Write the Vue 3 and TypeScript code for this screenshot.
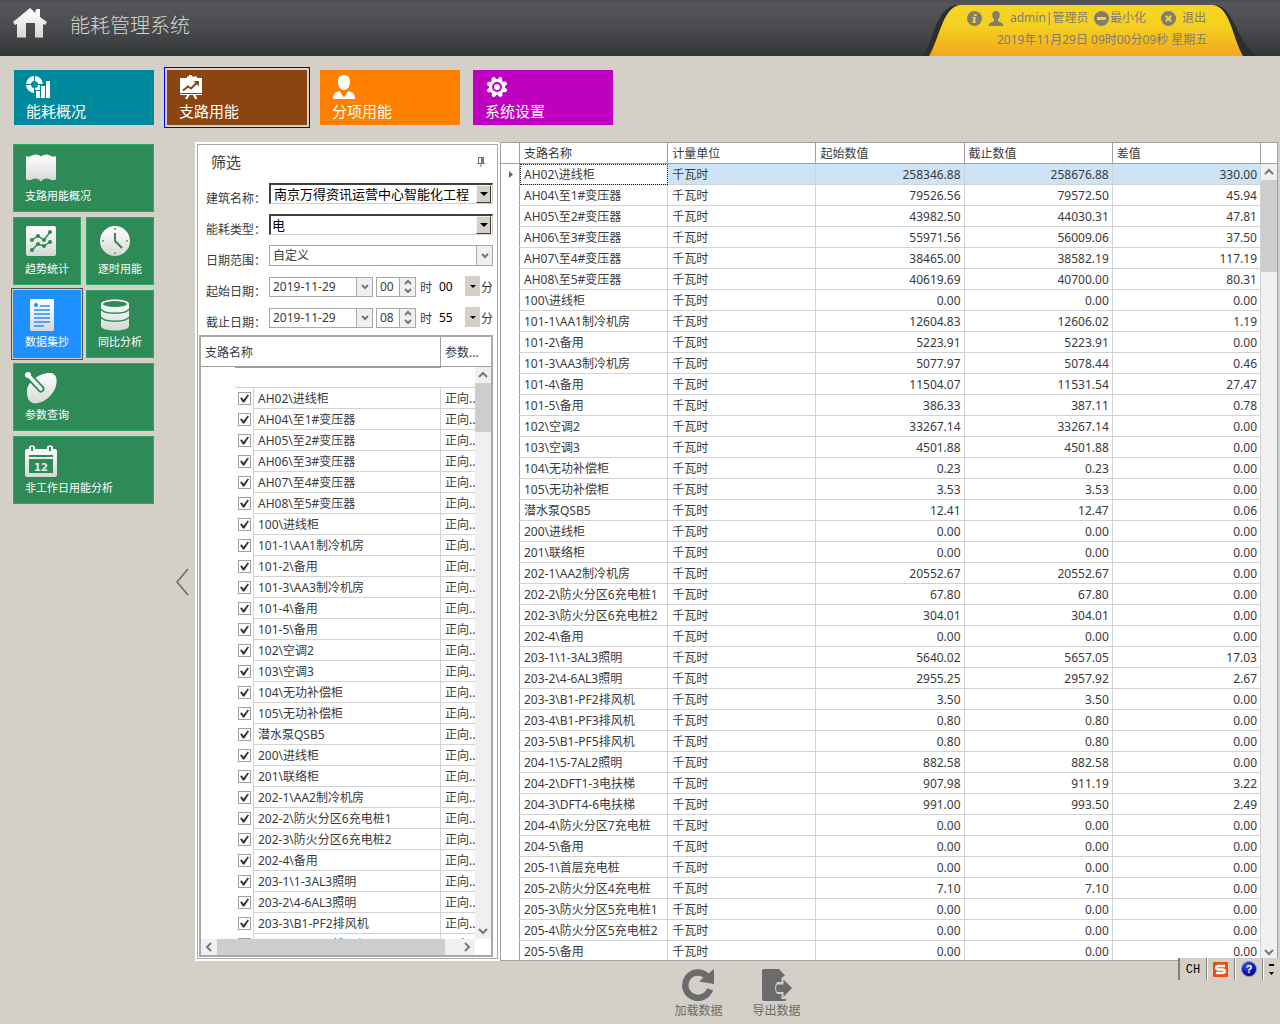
<script setup lang="ts">
import { ref } from 'vue'

interface Reading {
  name: string
  start: string
  end: string
  diff: string
}

const rawReadings: string[] = [
  'AH02\\进线柜|258346.88|258676.88|330.00',
  'AH04\\至1#变压器|79526.56|79572.50|45.94',
  'AH05\\至2#变压器|43982.50|44030.31|47.81',
  'AH06\\至3#变压器|55971.56|56009.06|37.50',
  'AH07\\至4#变压器|38465.00|38582.19|117.19',
  'AH08\\至5#变压器|40619.69|40700.00|80.31',
  '100\\进线柜|0.00|0.00|0.00',
  '101-1\\AA1制冷机房|12604.83|12606.02|1.19',
  '101-2\\备用|5223.91|5223.91|0.00',
  '101-3\\AA3制冷机房|5077.97|5078.44|0.46',
  '101-4\\备用|11504.07|11531.54|27.47',
  '101-5\\备用|386.33|387.11|0.78',
  '102\\空调2|33267.14|33267.14|0.00',
  '103\\空调3|4501.88|4501.88|0.00',
  '104\\无功补偿柜|0.23|0.23|0.00',
  '105\\无功补偿柜|3.53|3.53|0.00',
  '潜水泵QSB5|12.41|12.47|0.06',
  '200\\进线柜|0.00|0.00|0.00',
  '201\\联络柜|0.00|0.00|0.00',
  '202-1\\AA2制冷机房|20552.67|20552.67|0.00',
  '202-2\\防火分区6充电桩1|67.80|67.80|0.00',
  '202-3\\防火分区6充电桩2|304.01|304.01|0.00',
  '202-4\\备用|0.00|0.00|0.00',
  '203-1\\1-3AL3照明|5640.02|5657.05|17.03',
  '203-2\\4-6AL3照明|2955.25|2957.92|2.67',
  '203-3\\B1-PF2排风机|3.50|3.50|0.00',
  '203-4\\B1-PF3排风机|0.80|0.80|0.00',
  '203-5\\B1-PF5排风机|0.80|0.80|0.00',
  '204-1\\5-7AL2照明|882.58|882.58|0.00',
  '204-2\\DFT1-3电扶梯|907.98|911.19|3.22',
  '204-3\\DFT4-6电扶梯|991.00|993.50|2.49',
  '204-4\\防火分区7充电桩|0.00|0.00|0.00',
  '204-5\\备用|0.00|0.00|0.00',
  '205-1\\首层充电桩|0.00|0.00|0.00',
  '205-2\\防火分区4充电桩|7.10|7.10|0.00',
  '205-3\\防火分区5充电桩1|0.00|0.00|0.00',
  '205-4\\防火分区5充电桩2|0.00|0.00|0.00',
  '205-5\\备用|0.00|0.00|0.00',
]

const readings: Reading[] = rawReadings.map((line) => {
  const [name, start, end, diff] = line.split('|')
  return { name, start, end, diff }
})

const branches = ref(readings.slice(0, 27).map((r) => ({ name: r.name, checked: true })))
const selected = ref(0)

const periods = ref([
  { id: 'from', label: '起始日期：', date: '2019-11-29', hour: '00', minute: '00' },
  { id: 'to', label: '截止日期：', date: '2019-11-29', hour: '08', minute: '55' },
])
const minutes: string[] = Array.from({ length: 12 }, (_, i) => String(i * 5).padStart(2, '0'))

function stepHour(index: number, delta: number): void {
  const p = periods.value[index]
  p.hour = String((Number(p.hour) + delta + 24) % 24).padStart(2, '0')
}
</script>

<template>
  <div class="app">
    <svg class="defs" width="0" height="0" aria-hidden="true">
      <defs>
        <linearGradient id="silver" x1="0" y1="0" x2="0" y2="1">
          <stop offset="0" stop-color="#ffffff" />
          <stop offset="1" stop-color="#d6d8d7" />
        </linearGradient>
        <linearGradient id="gold" x1="0" y1="0" x2="0" y2="1">
          <stop offset="0" stop-color="#f5d623" />
          <stop offset="0.45" stop-color="#f5ce22" />
          <stop offset="1" stop-color="#f2a71b" />
        </linearGradient>
        <radialGradient id="ball" cx="0.4" cy="0.3" r="0.8">
          <stop offset="0" stop-color="#3f5bf0" />
          <stop offset="0.6" stop-color="#0a12b4" />
          <stop offset="1" stop-color="#000060" />
        </radialGradient>
      </defs>
    </svg>

    <header class="top">
      <svg class="home" width="36" height="32" viewBox="0 0 36 32" aria-hidden="true">
        <path fill="url(#silver)" d="M18 0 L23.500 5 V2 L25 1 H28 V9 L35 14 L33 17 L31 16 V29.500 H23 V15 H14 V29.500 H5 V16 L3 17 L1 14 Z" />
      </svg>
      <h1>能耗管理系统</h1>
      <div class="account">
        <svg class="tab" width="370" height="56" viewBox="0 0 370 56" aria-hidden="true">
          <path fill="#2b2d2f" d="M12 56 C22 50 24 8 46 5 H306 C326 8 328 50 350 56 Z" />
          <path fill="url(#gold)" d="M19 56 C30 38 32 8 50 5 H303 C320 7 322 36 333 56 Z" />
        </svg>
        <div class="line">
          <svg width="15" height="15" viewBox="0 0 15 15" aria-hidden="true">
            <circle cx="7.500" cy="7.500" r="7.500" fill="#7f7d72" />
            <path fill="#f5d223" d="M7.500 3 h2.500 l-.5 2 h-2.500z M5.500 6 h3.500 l-1 4.500 h1 l-.5 1.500 h-3.200 l1.200 -4.700 h-1.200z" />
          </svg>
          <svg class="who" width="16" height="15" viewBox="0 0 16 15" aria-hidden="true">
            <path fill="#7f7d72" d="M8 0 C11 0 12 2 11.700 4.500 C11.500 7 10.500 7.500 10 8.500 V10 C11 11.500 15 11 15.500 15 H.5 C1 11 5 11.500 6 10 V8.500 C5.500 7.500 4.500 7 4.300 4.500 C4 2 5 0 8 0Z" />
          </svg>
          <span class="user">admin|管理员</span>
          <button type="button" class="min">
            <svg width="15" height="15" viewBox="0 0 15 15" aria-hidden="true">
              <circle cx="7.500" cy="7.500" r="7.500" fill="#7f7d72" /><path fill="#f5d223" d="M3 6h9v3H3z" />
            </svg>最小化
          </button>
          <button type="button" class="quit">
            <svg width="15" height="15" viewBox="0 0 15 15" aria-hidden="true">
              <circle cx="7.500" cy="7.500" r="7.500" fill="#7f7d72" /><path stroke="#f5d223" stroke-width="2.200" d="M4.800 4.800l5.400 5.400M10.200 4.800l-5.400 5.400" />
            </svg>退出
          </button>
        </div>
        <time class="clock">2019年11月29日 09时00分09秒 星期五</time>
      </div>
    </header>

    <nav class="tiles">
      <button type="button" class="tile teal">
        <svg width="26" height="24" viewBox="0 0 26 24" aria-hidden="true">
          <circle cx="8.500" cy="9.500" r="6" fill="none" stroke="#fff" stroke-width="5" />
          <path stroke="#00889c" stroke-width="1" d="M8.500 0v6M8.500 13v6M0 9.500h6M12 9.500h6" />
          <path fill="#00889c" d="M9 15h5v-5h5v-5h7V24H9z" />
          <path fill="#fff" d="M10 16h4v7h-4zM15 11h4v12h-4zM20 6h4v17h-4z" />
        </svg>
        <span>能耗概况</span>
      </button>
      <button type="button" class="tile brown active">
        <svg width="26" height="24" viewBox="0 0 26 24" aria-hidden="true">
          <path fill="#fff" d="M10 0h3v1.500h5V3h5V18H1V3H8V1.500h2zM1 19h22v1H1zM8 20h2.500l-2 4H6zM14 20h2.500l2 4H16z" />
          <path fill="none" stroke="#8b4513" stroke-width="2" d="M4 15.500l5-4 3 2 6-6" />
          <path fill="#8b4513" d="M14.500 6H20v5.500z" />
        </svg>
        <span>支路用能</span>
      </button>
      <button type="button" class="tile orange">
        <svg width="26" height="24" viewBox="0 0 26 24" aria-hidden="true">
          <path fill="#fff" d="M12 0c5 0 6 3 6 7 0 5-3 8-6 8s-6-3-6-8c0-4 1-7 6-7zM7.500 16L12 22.500l4.500-6.500C20 17.500 23 18 23 24H1c0-6 3-6.500 6.500-8z" />
        </svg>
        <span>分项用能</span>
      </button>
      <button type="button" class="tile purple">
        <svg width="26" height="24" viewBox="0 0 26 24" aria-hidden="true">
          <g fill="#fff">
            <circle cx="12" cy="12" r="8" />
            <path v-for="n in 8" :key="n" d="M9.500 5L10.500 1.500h3L14.500 5z" :transform="`rotate(${n * 45 + 22} 12 12)`" />
          </g>
          <circle cx="12" cy="12" r="4" fill="none" stroke="#c000c0" stroke-width="2" />
        </svg>
        <span>系统设置</span>
      </button>
    </nav>

    <div class="body">
      <aside class="side">
        <nav class="cards">
          <button type="button" class="card wide">
            <svg width="32" height="32" viewBox="0 0 32 32" aria-hidden="true">
              <path fill="url(#silver)" d="M1 3 Q4 4.500 7 2.500 Q12 0 16 3.500 Q20 0 25 2.500 Q28 4.500 31 3 V26.500 Q27 28 24 26 Q19 24.500 16 28.500 Q13 24.500 8 26 Q5 28 1 26.500 Z" />
            </svg>
            <span>支路用能概况</span>
          </button>
          <button type="button" class="card">
            <svg width="32" height="32" viewBox="0 0 32 32" aria-hidden="true">
              <rect x="1" y="0" width="30" height="30" rx="2" fill="url(#silver)" />
              <g fill="none" stroke="#2e8b57" stroke-width="1.500"><path d="M7 14l6-4 6 4 6-8M7 24l6-6 6 2 6-4" /></g>
              <g fill="#2e8b57"><circle cx="7" cy="14" r="2" /><circle cx="13" cy="10" r="2" /><circle cx="19" cy="14" r="2" /><circle cx="25" cy="6" r="2" /><circle cx="7" cy="24" r="2" /><circle cx="13" cy="18" r="2" /><circle cx="19" cy="20" r="2" /><circle cx="25" cy="16" r="2" /></g>
            </svg>
            <span>趋势统计</span>
          </button>
          <button type="button" class="card">
            <svg width="32" height="32" viewBox="0 0 32 32" aria-hidden="true">
              <circle cx="17" cy="15" r="15" fill="url(#silver)" />
              <path fill="none" stroke="#2e8b57" stroke-width="2" d="M17 7v8l7 7" />
              <path fill="#6fb38c" d="M16 2h2v2h-2zM16 26h2v2h-2zM4 14h2v2H4zM28 14h2v2h-2z" />
            </svg>
            <span>逐时用能</span>
          </button>
          <button type="button" class="card current">
            <svg width="32" height="32" viewBox="0 0 32 32" aria-hidden="true">
              <rect x="5" y="0" width="24" height="32" rx="1" fill="url(#silver)" />
              <circle cx="11" cy="6" r="2" fill="#1e90ff" />
              <path stroke="#1e90ff" stroke-width="1.500" d="M15 7h10M9 11h16M9 15h16M9 19h16M9 23h16M9 27h10" />
            </svg>
            <span>数据集抄</span>
          </button>
          <button type="button" class="card">
            <svg width="32" height="32" viewBox="0 0 32 32" aria-hidden="true">
              <path fill="url(#silver)" d="M3 5C3-1 31-1 31 5V27C31 33 3 33 3 27Z" />
              <ellipse cx="17" cy="5" rx="12" ry="3" fill="#2e8b57" />
              <path fill="none" stroke="#2e8b57" stroke-width="1.500" d="M3 10C5 15.500 29 15.500 31 10M3 18C5 23.500 29 23.500 31 18" />
            </svg>
            <span>同比分析</span>
          </button>
          <button type="button" class="card wide">
            <svg width="34" height="32" viewBox="0 0 34 32" aria-hidden="true">
              <path fill="url(#silver)" d="M2 20C1 11 14 0 26 1C32 2 33 9 30 17C25 27 14 33 8 31C4 30 2 26 2 20Z" />
              <path stroke="#2e8b57" stroke-width="7" stroke-linecap="round" d="M3 3L16 17" />
              <path stroke="#f4f4f4" stroke-width="3.500" stroke-linecap="round" d="M3 3L16 17" />
              <circle cx="3" cy="3" r="3" fill="#fff" />
            </svg>
            <span>参数查询</span>
          </button>
          <button type="button" class="card wide">
            <svg width="32" height="32" viewBox="0 0 32 32" aria-hidden="true">
              <path fill="url(#silver)" fill-rule="evenodd" d="M2 4H4V2C4 0 10 0 10 2V4H22V2C22 0 28 0 28 2V4H30Q32 4 32 6V30Q32 32 30 32H2Q0 32 0 30V6Q0 4 2 4ZM6 2V6H8V2ZM24 2V6H26V2ZM4 10V12H28V10ZM4 14V28H28V14Z" />
              <text x="16" y="26" text-anchor="middle" font-family="DejaVu Sans, sans-serif" font-size="10" font-weight="700" fill="#e6e8e7">12</text>
            </svg>
            <span>非工作日用能分析</span>
          </button>
        </nav>
        <button type="button" class="fold" aria-label="收起">
          <svg width="14" height="28" viewBox="0 0 14 28" aria-hidden="true"><path fill="none" stroke="#6b6b6b" stroke-width="1.500" d="M13 1L2 14L13 27" /></svg>
        </button>
      </aside>

      <main class="content">
        <div class="panels">
          <section class="filter">
            <div class="frame">
              <div class="caption">
                <h2>筛选</h2>
                <svg width="8" height="10" viewBox="0 0 8 10" aria-hidden="true"><path fill="#777" fill-rule="evenodd" d="M1 0H7V6H8V7H4.500V10H3.500V7H0V6H1ZM2 1V6H4V1Z" /></svg>
              </div>
              <form class="fields" @submit.prevent>
                <div class="field">
                  <label for="building">建筑名称：</label>
                  <span class="combo classic">
                    <select id="building"><option>南京万得资讯运营中心智能化工程</option></select>
                    <i class="drop"></i>
                  </span>
                </div>
                <div class="field">
                  <label for="energy">能耗类型：</label>
                  <span class="combo classic slim">
                    <select id="energy"><option>电</option></select>
                    <i class="drop"></i>
                  </span>
                </div>
                <div class="field">
                  <label for="range">日期范围：</label>
                  <span class="combo flat">
                    <select id="range"><option>自定义</option></select>
                    <i class="drop"><svg width="8" height="6" viewBox="0 0 8 6"><path d="M1 1l3 3 3-3" /></svg></i>
                  </span>
                </div>
                <div v-for="(p, i) in periods" :key="p.id" class="field">
                  <label :for="p.id">{{ p.label }}</label>
                  <span class="box date">
                    <input :id="p.id" v-model="p.date" type="text" />
                    <button type="button" aria-label="选择日期"><svg width="8" height="6" viewBox="0 0 8 6"><path d="M1 1l3 3 3-3" /></svg></button>
                  </span>
                  <span class="box hour">
                    <input :id="p.id + '-hour'" v-model="p.hour" type="text" />
                    <span class="spin">
                      <button type="button" aria-label="增加" @click="stepHour(i, 1)"><svg width="8" height="6" viewBox="0 0 8 6"><path d="M1 5l3-3 3 3" /></svg></button>
                      <button type="button" aria-label="减少" @click="stepHour(i, -1)"><svg width="8" height="6" viewBox="0 0 8 6"><path d="M1 1l3 3 3-3" /></svg></button>
                    </span>
                  </span>
                  <label class="unit" :for="p.id + '-hour'">时</label>
                  <span class="combo minute">
                    <select :id="p.id + '-minute'" v-model="p.minute"><option v-for="m in minutes" :key="m">{{ m }}</option></select>
                    <i class="drop"></i>
                  </span>
                  <label class="unit" :for="p.id + '-minute'">分</label>
                </div>
              </form>

              <div class="tree">
                <table>
                  <colgroup><col class="c-indent" /><col class="c-check" /><col /><col class="c-param" /></colgroup>
                  <thead>
                    <tr><th colspan="3">支路名称</th><th>参数...</th></tr>
                  </thead>
                  <tbody>
                    <tr class="group"><td></td><td></td><td></td><td></td></tr>
                    <tr v-for="b in branches" :key="b.name">
                      <td class="indent"></td>
                      <td class="check"><input v-model="b.checked" type="checkbox" :aria-label="b.name" /></td>
                      <td>{{ b.name }}</td>
                      <td>正向...</td>
                    </tr>
                  </tbody>
                </table>
                <div class="vbar">
                  <svg width="10" height="8" viewBox="0 0 10 8"><path d="M1 6l4-4 4 4" /></svg>
                  <div class="thumb short"></div>
                  <svg width="10" height="8" viewBox="0 0 10 8"><path d="M1 2l4 4 4-4" /></svg>
                </div>
                <div class="hbar">
                  <svg width="8" height="10" viewBox="0 0 8 10"><path d="M6 1l-4 4 4 4" /></svg>
                  <div class="thumb"></div>
                  <svg width="8" height="10" viewBox="0 0 8 10"><path d="M2 1l4 4-4 4" /></svg>
                </div>
              </div>
            </div>
          </section>

          <section class="grid">
            <div class="gridview">
              <table>
                <colgroup><col class="c-mark" /><col /><col /><col /><col /><col /></colgroup>
                <thead>
                  <tr><th></th><th>支路名称</th><th>计量单位</th><th>起始数值</th><th>截止数值</th><th>差值</th></tr>
                </thead>
                <tbody>
                  <tr v-for="(r, i) in readings" :key="r.name" :class="{ picked: i === selected }" @click="selected = i">
                    <td class="mark"><svg v-if="i === selected" width="4" height="7" viewBox="0 0 4 7"><path fill="#666" d="M0 0l4 3.500-4 3.500z" /></svg></td>
                    <td class="name">{{ r.name }}</td>
                    <td>千瓦时</td>
                    <td class="num">{{ r.start }}</td>
                    <td class="num">{{ r.end }}</td>
                    <td class="num">{{ r.diff }}</td>
                  </tr>
                </tbody>
              </table>
            </div>
            <div class="rail">
              <div class="cap"></div>
              <div class="vbar">
                <svg width="10" height="8" viewBox="0 0 10 8"><path d="M1 6l4-4 4 4" /></svg>
                <div class="thumb"></div>
                <svg width="10" height="8" viewBox="0 0 10 8"><path d="M1 2l4 4 4-4" /></svg>
              </div>
            </div>
          </section>
        </div>

        <footer class="actions">
          <button type="button">
            <svg width="32" height="32" viewBox="0 0 32 32" aria-hidden="true">
              <path fill="none" stroke="#6b6b6b" stroke-width="6.500" d="M25 7.200A12.700 12.700 0 1 0 28 20.300" />
              <path fill="#6b6b6b" d="M32 0V15L17 12.500Z" />
            </svg>
            <span>加载数据</span>
          </button>
          <button type="button">
            <svg width="32" height="32" viewBox="0 0 32 32" aria-hidden="true">
              <path fill="#6b6b6b" d="M3 0H18L24 6.500L20.500 9V13H16Q12 19.500 16 25H20.500V30H25V31Q25 32 24 32H3Q1 32 1 30V2Q1 0 3 0Z" />
              <path fill="#6b6b6b" d="M16 15.500H22.500V10.500L31 19L22.500 28V23H16Q14 19.500 16 15.500Z" />
            </svg>
            <span>导出数据</span>
          </button>
        </footer>
      </main>
    </div>

    <div class="ime">
      <span class="lang">CH</span>
      <span class="slot">
        <svg width="15" height="15" viewBox="0 0 15 15" aria-hidden="true">
          <rect width="15" height="15" rx="1" fill="#e94e0f" />
          <path fill="none" stroke="#fff" stroke-width="2.500" d="M12 4H5.500C2.500 4 2.500 7.500 5.500 7.500H9.500C12.500 7.500 12.500 11 9.500 11H3" />
        </svg>
      </span>
      <span class="slot">
        <svg width="16" height="16" viewBox="0 0 16 16" aria-hidden="true">
          <circle cx="8" cy="8" r="7.500" fill="url(#ball)" stroke="#8a96a8" />
          <text x="8" y="12" text-anchor="middle" font-family="Liberation Sans, sans-serif" font-size="11" font-weight="700" fill="#fff">?</text>
        </svg>
      </span>
      <span class="slot more">
        <svg width="5" height="11" viewBox="0 0 5 11" aria-hidden="true"><path d="M0 0h5v2H0zM0 8h5L2.500 11z" /></svg>
      </span>
    </div>
  </div>
</template>

<style>
body {
  margin: 0;
  background: #d4d0c8;
}
</style>

<style scoped>
* {
  box-sizing: border-box;
}
.app {
  position: relative;
  display: flex;
  flex-direction: column;
  height: 100vh;
  overflow: hidden;
  background: #d4d0c8;
  color: #3a3a3a;
  font: 12px/20px "Noto Sans", "Noto Sans CJK SC", sans-serif;
}
.defs {
  position: absolute;
}
button,
input,
select {
  margin: 0;
  padding: 0;
  border: 0;
  border-radius: 0;
  background: none;
  color: inherit;
  font: inherit;
}
h1,
h2 {
  margin: 0;
  font-weight: 400;
}
svg {
  display: block;
  flex: none;
}

/* header */
.top {
  display: flex;
  flex: none;
  height: 56px;
  padding-left: 12px;
  background: linear-gradient(#4b4c50, #55565a 4px, #4a4b4e 50%, #323537);
}
.home {
  margin-top: 8px;
}
h1 {
  margin: 11px 0 0 22px;
  color: #d8d4cc;
  font-size: 20px;
  font-weight: 300;
  line-height: 30px;
}
.account {
  position: relative;
  width: 370px;
  margin-left: auto;
  padding: 8px 0 0 57px;
  color: #7f7d72;
  white-space: nowrap;
}
.tab {
  position: absolute;
  top: 0;
  left: 0;
}
.line {
  position: relative;
  display: flex;
  align-items: center;
  height: 20px;
}
.who {
  margin-left: 6px;
}
.user {
  flex: none;
  width: 78px;
  margin: 0 6px;
}
.account button {
  display: flex;
  align-items: center;
}
.min {
  gap: 1px;
}
.quit {
  gap: 6px;
  margin-left: 15px;
}
.clock {
  position: relative;
  display: block;
  padding-left: 30px;
  line-height: 24px;
}

/* main navigation */
.tiles {
  display: flex;
  flex: none;
  gap: 13px;
  padding: 14px 14px 17px;
}
.tile {
  display: flex;
  flex-direction: column;
  align-items: flex-start;
  width: 140px;
  height: 55px;
  padding: 5px 12px 0;
  color: #fff;
  font-size: 15px;
  line-height: 24px;
}
.teal {
  background: #00889c;
}
.brown {
  background: #8b4513;
}
.orange {
  background: #ff8000;
}
.purple {
  background: #c000c0;
}
.active {
  outline: 1px solid #0000e8;
  outline-offset: 2px;
}

/* sidebar */
.body {
  display: flex;
  flex: 1;
  min-height: 0;
}
.side {
  display: flex;
  flex: none;
  width: 195px;
  padding: 2px 6px 0 13px;
  justify-content: space-between;
}
.cards {
  display: grid;
  grid-template-columns: 68px 68px;
  grid-auto-rows: 68px;
  gap: 5px;
}
.card {
  display: flex;
  flex-direction: column;
  align-items: flex-start;
  padding: 8px 11px 0;
  border: 1px solid #2fa866;
  background: #2e8b57;
  color: #fff;
  font-size: 11px;
  line-height: 22px;
  white-space: nowrap;
}
.wide {
  grid-column: span 2;
}
.current {
  border-color: #1e90ff;
  background: #1e90ff;
  outline: 1px solid #55514c;
  outline-offset: 1px;
}
.fold {
  align-self: center;
  margin-bottom: 4px;
}

/* panels */
.content {
  display: flex;
  flex: 1;
  flex-direction: column;
  min-width: 0;
}
.panels {
  display: flex;
  flex: 1;
  min-height: 0;
  padding-right: 2px;
}
.filter {
  flex: none;
  width: 305px;
  padding: 2px;
  background: #fff;
}
.frame {
  display: flex;
  flex-direction: column;
  height: 100%;
  border: 1px solid #a8a8a8;
}
.caption {
  display: flex;
  align-items: center;
  justify-content: space-between;
  height: 38px;
  padding: 0 12px 4px 13px;
}
h2 {
  font-size: 15px;
}
.fields {
  display: flex;
  flex-direction: column;
  gap: 10px;
  padding: 0 4px 7px 8px;
}
.field {
  display: flex;
  align-items: center;
  height: 21px;
}
.field > label {
  flex: none;
  width: 63px;
  padding-top: 11px;
  line-height: 12px;
  white-space: nowrap;
}
.field > .unit {
  width: 12px;
  padding-top: 2px;
}
.combo {
  position: relative;
  display: block;
  flex: 1;
  min-width: 0;
  height: 21px;
}
.combo select {
  width: 100%;
  height: 100%;
  appearance: none;
}
.drop {
  position: absolute;
  top: 2px;
  right: 2px;
  bottom: 1px;
  display: grid;
  place-items: center;
  width: 15px;
  background: #d4d0c8;
  pointer-events: none;
}
.classic select {
  padding-left: 3px;
  border: 2px solid #404040;
  border-right: 1px solid #d4d0c8;
  border-bottom: 1px solid #d4d0c8;
  color: #000;
  font-size: 13px;
  line-height: 16px;
}
.slim select {
  padding-left: 1px;
}
.classic .drop {
  border: 1px solid #f4f4f4;
  border-right-color: #404040;
  border-bottom-color: #404040;
}
.classic .drop::after,
.minute .drop::after {
  border: 4px solid transparent;
  border-top-color: #000;
  border-bottom: 0;
  content: "";
}
.flat select {
  padding-left: 3px;
  border: 1px solid #a8a8a8;
  line-height: 18px;
}
.flat .drop {
  top: 1px;
  right: 1px;
  width: 16px;
  border-left: 1px solid #a8a8a8;
  background: #f0f0f0;
}
.box {
  display: flex;
  flex: none;
  height: 20px;
  border: 1px solid #a8a8a8;
}
.box input {
  flex: 1;
  width: 0;
  min-width: 0;
  padding-left: 3px;
}
.box > button,
.spin {
  display: grid;
  place-items: center;
  width: 16px;
  border-left: 1px solid #a8a8a8;
  background: #f0f0f0;
}
.date {
  width: 104px;
}
.hour {
  width: 40px;
  margin: 0 4px 0 3px;
}
.spin button {
  display: grid;
  place-items: center;
  height: 9px;
}
.minute {
  width: 48px;
}
.minute select {
  padding-left: 7px;
  color: #000;
}
.minute .drop {
  top: 0;
  right: 1px;
}
.minute .drop::after {
  border-width: 3px 3px 0;
}
.drop path,
.box path,
.vbar path,
.hbar path {
  fill: none;
  stroke: #777;
  stroke-width: 2;
}

/* tables */
table {
  width: 100%;
  table-layout: fixed;
  border-collapse: separate;
  border-spacing: 0;
}
th,
td {
  height: 21px;
  padding: 2px 3px 0 4px;
  border-right: 1px solid #d2d2d2;
  border-bottom: 1px solid #d2d2d2;
  line-height: 18px;
  overflow: hidden;
  text-align: left;
  white-space: nowrap;
}
th {
  border-color: #a0a0a0;
  font-weight: 400;
}
.tree {
  position: relative;
  flex: 1;
  min-height: 0;
  margin: 0 4px 1px 1px;
  border: 2px solid #a8a8a8;
  overflow: hidden;
}
.tree th {
  height: 30px;
}
.tree th:last-child,
.tree td:last-child {
  border-right: 0;
}
.c-indent {
  width: 34px;
}
.c-check {
  width: 19px;
}
.c-param {
  width: 50px;
}
.tree .indent {
  border: 0;
}
.tree .check {
  padding: 0 0 0 3px;
  border-bottom: 0;
}
.tree .group td {
  border-right: 0;
}
.tree .group td:first-child {
  border: 0;
}
.tree .group td:nth-child(2),
.tree .group td:nth-child(3) {
  border-top: 1px solid #7f9fc4;
}
input[type="checkbox"] {
  display: grid;
  place-items: center;
  width: 13px;
  height: 13px;
  border: 1px solid #a0a0a0;
  appearance: none;
}
input[type="checkbox"]:checked::after {
  width: 9px;
  height: 9px;
  background: #333;
  clip-path: polygon(0 45%, 20% 40%, 40% 65%, 85% 5%, 100% 15%, 48% 95%, 32% 95%);
  content: "";
}
.vbar,
.hbar {
  display: flex;
  align-items: center;
  background: #f0f0f0;
}
.vbar {
  flex-direction: column;
  width: 16px;
  padding: 4px 0;
}
.thumb {
  background: #cdcdcd;
}
.vbar .thumb {
  width: 100%;
  height: 92px;
  margin: 4px 0 auto;
}
.vbar .short {
  height: 49px;
}
.tree .vbar {
  position: absolute;
  top: 30px;
  right: 0;
  bottom: 16px;
}
.hbar {
  position: absolute;
  right: 0;
  bottom: 0;
  left: 0;
  height: 16px;
  padding: 0 4px;
  border-right: 16px solid #fff;
}
.hbar .thumb {
  flex: 1;
  height: 100%;
  margin: 0 18px 0 4px;
}

/* readings grid */
.grid {
  display: flex;
  flex: 1;
  min-width: 0;
  border: 1px solid #a0a0a0;
  background: #fff;
}
.gridview {
  flex: 1;
  min-width: 0;
  overflow: hidden;
}
.c-mark {
  width: 19px;
}
.mark {
  padding: 0 0 0 8px;
  border-right-color: #a0a0a0;
}
tbody .mark {
  border-bottom-color: #fff;
}
.picked td {
  background: #cde4f6;
}
.picked .mark {
  background: #fff;
}
.picked .name {
  background: #fff;
  outline: 1px dotted #222;
  outline-offset: -1px;
}
.num {
  text-align: right;
}
.rail {
  display: flex;
  flex: none;
  flex-direction: column;
  width: 16px;
}
.cap {
  flex: none;
  height: 21px;
  border-bottom: 1px solid #a0a0a0;
}
.rail .vbar {
  flex: 1;
}

/* bottom actions */
.actions {
  display: flex;
  flex: none;
  justify-content: center;
  gap: 30px;
  height: 63px;
  padding-top: 8px;
  color: #6b6b6b;
}
.actions button {
  display: flex;
  flex-direction: column;
  align-items: center;
  line-height: 20px;
}

/* language bar */
.ime {
  position: absolute;
  right: 0;
  bottom: 44px;
  display: flex;
  width: 102px;
  height: 22px;
  border-left: 2px solid #808080;
  background: #d4d0c8;
  color: #000;
}
.lang {
  width: 26px;
  font: 12px/24px "Liberation Mono", monospace;
  text-align: center;
}
.slot {
  display: grid;
  place-items: center;
  width: 28px;
  border-left: 1px solid #808080;
  box-shadow: inset 1px 0 #fff;
}
.more {
  width: 18px;
}
</style>
